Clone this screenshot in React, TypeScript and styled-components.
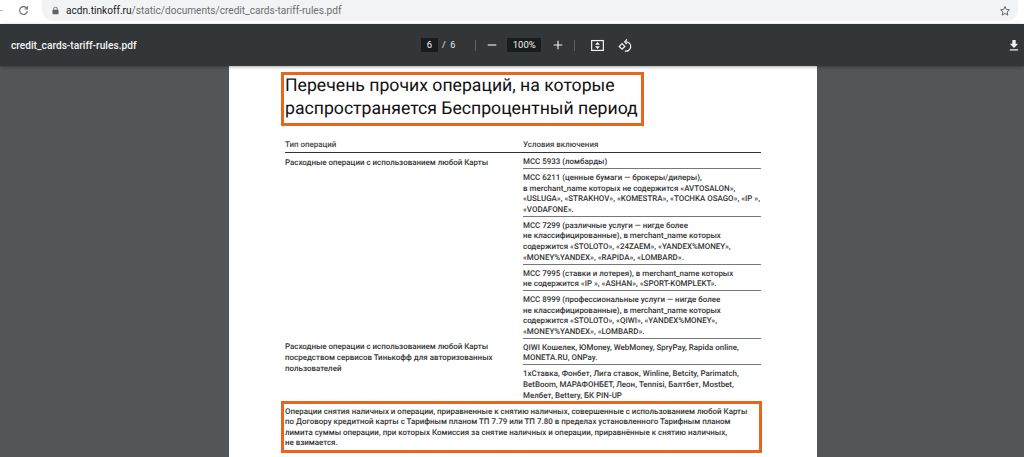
import React from "react";
import styled, {createGlobalStyle} from "styled-components";

const GlobalStyle = createGlobalStyle`
  html, body {
    margin: 0;
    padding: 0;
    height: 100%;
    overflow: hidden;
    background: #525659;
  }
  * {
    box-sizing: border-box;
  }
`;

const rows = [
  {
    title: "Расходные операции с использованием любой Карты",
    conditions: [
      ["MCC 5933 (ломбарды)"],
      [
        "MCC 6211 (ценные бумаги — брокеры/дилеры),",
        "в merchant_name которых не содержится «AVTOSALON»,",
        "«USLUGA», «STRAKHOV», «KOMESTRA», «TOCHKA OSAGO», «IP »,",
        "«VODAFONE».",
      ],
      [
        "MCC 7299 (различные услуги — нигде более",
        "не классифицированные), в merchant_name которых",
        "содержится «STOLOTO», «24ZAEM», «YANDEX%MONEY»,",
        "«MONEY%YANDEX», «RAPIDA», «LOMBARD».",
      ],
      [
        "MCC 7995 (ставки и лотерея), в merchant_name которых",
        "не содержится «IP », «ASHAN», «SPORT-KOMPLEKT».",
      ],
      [
        "MCC 8999 (профессиональные услуги — нигде более",
        "не классифицированные), в merchant_name которых",
        "содержится «STOLOTO», «QIWI», «YANDEX%MONEY»,",
        "«MONEY%YANDEX», «LOMBARD».",
      ],
    ],
  },
  {
    title:
      "Расходные операции с использованием любой Карты посредством сервисов Тинькофф для авторизованных пользователей",
    conditions: [
      [
        "QIWI Кошелек, ЮMoney, WebMoney, SpryPay, Rapida online,",
        "MONETA.RU, ONPay.",
      ],
      [
        "1xСтавка, Фонбет, Лига ставок, Winline, Betcity, Parimatch,",
        "BetBoom, МАРАФОНБЕТ, Леон, Tennisi, Балтбет, Mostbet,",
        "Мелбет, Bettery, БК PIN-UP",
      ],
    ],
  },
];

const noteLines = [
  "Операции снятия наличных и операции, приравненные к снятию наличных, совершенные с использованием любой Карты",
  "по Договору кредитной карты с Тарифным планом ТП 7.79 или ТП 7.80 в пределах установленного Тарифным планом",
  "лимита суммы операции, при которых Комиссия за снятие наличных и операции, приравнённые к снятию наличных,",
  "не взимается.",
];

const App = () => {
  return (
    <Screen>
      <GlobalStyle />
      <AddressBar>
        <NavIcons>
          <NavIcon viewBox="0 0 16 16" $muted>
            <path d="M14 8H3M7.5 3.5 3 8l4.5 4.5" />
          </NavIcon>
          <NavIcon viewBox="0 0 16 16">
            <path d="M13 5.2A5.7 5.7 0 1 0 13.7 9" />
            <path d="M13.6 1.8v4h-4" />
          </NavIcon>
        </NavIcons>
        <Omnibox>
          <LockIcon viewBox="0 0 10 12">
            <path d="M2 5V3.6a3 3 0 0 1 6 0V5h.6c.4 0 .7.3.7.7v4.800c0 .4-.3.7-.7.7H1.400c-.4 0-.7-.3-.7-.7V5.700c0-.4.3-.7.7-.7zm1.200 0h3.600V3.600a1.800 1.800 0 0 0-3.600 0z" />
          </LockIcon>
          <Url>
            <UrlHost>acdn.tinkoff.ru</UrlHost>/static/documents/credit_cards-tariff-rules.pdf
          </Url>
          <StarIcon viewBox="0 0 16 16">
            <path d="m8 2 1.800 4 4.200.4-3.200 2.800 1 4.300L8 11.200 4.200 13.500l1-4.300L2 6.400 6.200 6z" />
          </StarIcon>
        </Omnibox>
      </AddressBar>

      <PdfToolbar>
        <FileName>credit_cards-tariff-rules.pdf</FileName>
        <ToolbarCenter>
          <ValueBox $wide={false}>6</ValueBox>
          <PageTotal>/&nbsp;&nbsp;6</PageTotal>
          <Divider $before={20} $after={10} />
          <ToolIcon viewBox="0 0 14 14">
            <path d="M2 7h10" />
          </ToolIcon>
          <ValueBox $wide>100%</ValueBox>
          <ToolIcon viewBox="0 0 14 14">
            <path d="M2 7h10M7 2v10" />
          </ToolIcon>
          <Divider $before={10} $after={15} />
          <FitIcon viewBox="0 0 16 14">
            <rect x="1.700" y="1.700" width="12.600" height="10.600" />
            <path d="M6.800 5.500 8 4.200 9.200 5.500zM6.800 8.500 8 9.800 9.200 8.500z" fill="#f1f3f4" />
          </FitIcon>
          <RotateIcon viewBox="0 0 16 16">
            <path d="M8.500 4.200a4.900 4.900 0 1 1-1.200 9.600" />
            <path d="M4.300 6 1.300 9l3 3 3-3z" />
            <path d="m9.500 1.500-2.400 2.700 2.400 2.300" />
          </RotateIcon>
        </ToolbarCenter>
        <DownloadIcon viewBox="0 0 12 14">
          <path d="M4 1h4v4.500h3L6 10.500 1 5.500h3zM1 12h10v1.500H1z" />
        </DownloadIcon>
      </PdfToolbar>

      <Viewer>
        <Sheet>
          <Heading>
            Перечень прочих операций, на которые
            <br />
            распространяется Беспроцентный период
          </Heading>
          <TableHead>
            <HeadCell>Тип операций</HeadCell>
            <HeadCell>Условия включения</HeadCell>
          </TableHead>
          {rows.map((row, rowIndex) => (
            <TableRow key={rowIndex}>
              <RowTitle>{row.title}</RowTitle>
              <Conditions>
                {row.conditions.map((lines, index) => (
                  <Condition key={index} $ruled={index > 0 || rowIndex > 0}>
                    {lines.map((line) => (
                      <div key={line}>{line}</div>
                    ))}
                  </Condition>
                ))}
              </Conditions>
            </TableRow>
          ))}
          <Note>
            {noteLines.map((line) => (
              <div key={line}>{line}</div>
            ))}
          </Note>
        </Sheet>
      </Viewer>
    </Screen>
  );
};

const Screen = styled.div`
  display: flex;
  flex-direction: column;
  height: 100vh;
  overflow: hidden;
  font-family: Roboto, "Liberation Sans", sans-serif;
`;

const AddressBar = styled.div`
  display: flex;
  align-items: flex-start;
  height: 24px;
  flex: none;
  background: #fff;
`;

const NavIcons = styled.div`
  display: flex;
  align-items: center;
  gap: 13.500px;
  width: 49px;
  height: 21px;
  margin-left: -7px;
  flex: none;
`;

const NavIcon = styled.svg<{$muted?: boolean}>`
  width: 11px;
  height: 11px;
  flex: none;
  fill: none;
  stroke: ${(props) => (props.$muted ? "#b0b3b6" : "#5f6368")};
  stroke-width: 1.600;
`;

const Omnibox = styled.div`
  display: flex;
  align-items: center;
  flex: 1;
  height: 21px;
  margin-right: 6px;
  padding: 0 7px 0 10px;
  background: #f1f3f4;
  border-radius: 0 0 11px 11px;
`;

const LockIcon = styled.svg`
  width: 7px;
  height: 9px;
  flex: none;
  fill: #5f6368;
`;

const Url = styled.div`
  flex: 1;
  margin-left: 7px;
  font-size: 10.100px;
  color: #6b6f73;
  white-space: nowrap;
`;

const UrlHost = styled.span`
  color: #202124;
`;

const StarIcon = styled.svg`
  width: 12px;
  height: 12px;
  flex: none;
  fill: none;
  stroke: #5f6368;
  stroke-width: 1.300;
`;

const PdfToolbar = styled.div`
  display: flex;
  align-items: center;
  height: 42px;
  flex: none;
  padding: 0 5px 0 11px;
  background: #323639;
  box-shadow: 0 1px 3px rgba(0, 0, 0, 0.35);
  position: relative;
  z-index: 1;
`;

const FileName = styled.div`
  width: 410px;
  flex: none;
  font-size: 10.200px;
  font-weight: 500;
  color: #f1f3f4;
  white-space: nowrap;
`;

const ToolbarCenter = styled.div`
  display: flex;
  align-items: center;
  flex: 1;
`;

const ValueBox = styled.div<{$wide: boolean}>`
  width: ${(props) => (props.$wide ? "34px" : "17px")};
  height: 14px;
  margin: ${(props) => (props.$wide ? "0 11px 0 9px" : "0")};
  background: #191b1c;
  color: #f1f3f4;
  font-size: 9.500px;
  line-height: 14px;
  text-align: center;
`;

const PageTotal = styled.div`
  margin-left: 4px;
  font-size: 9px;
  color: #e8eaed;
  white-space: nowrap;
`;

const Divider = styled.div<{$before: number; $after: number}>`
  width: 1px;
  height: 11px;
  margin: 0 ${(props) => props.$after}px 0 ${(props) => props.$before}px;
  background: #5f6368;
  flex: none;
`;

const ToolIcon = styled.svg`
  width: 12px;
  height: 12px;
  flex: none;
  fill: none;
  stroke: #f1f3f4;
  stroke-width: 1.300;
`;

const FitIcon = styled.svg`
  width: 15px;
  height: 13px;
  flex: none;
  fill: none;
  stroke: #f1f3f4;
  stroke-width: 1.300;
`;

const RotateIcon = styled.svg`
  width: 15px;
  height: 15px;
  margin-left: 13px;
  flex: none;
  fill: none;
  stroke: #f1f3f4;
  stroke-width: 1.300;
`;

const DownloadIcon = styled.svg`
  width: 10px;
  height: 12px;
  flex: none;
  fill: #f1f3f4;
`;

const Viewer = styled.div`
  display: flex;
  justify-content: center;
  flex: 1;
  min-height: 0;
  background: #525659;
`;

const Sheet = styled.div`
  width: 588px;
  height: 100%;
  margin-left: 22px;
  padding: 6px 56px 0 52px;
  background: #fff;
  color: #2a2a2a;
  text-rendering: geometricPrecision;
`;

const Heading = styled.h1`
  width: 363px;
  height: 54px;
  margin: 0 0 13px;
  padding: 0 0 0 1px;
  border: 3px solid #e8651e;
  font-size: 17.650px;
  font-weight: 400;
  line-height: 23px;
  color: #111;
  white-space: nowrap;
`;

const TableHead = styled.div`
  display: grid;
  grid-template-columns: 238px 238px;
  margin-left: 4px;
  height: 14px;
  border-bottom: 1px solid #333;
`;

const HeadCell = styled.div`
  margin-top: 1px;
  font-size: 7.950px;
  font-weight: 500;
  line-height: 10px;
  color: #444;
`;

const TableRow = styled.div`
  display: grid;
  grid-template-columns: 238px 238px;
  margin-left: 4px;
`;

const RowTitle = styled.div`
  width: 220px;
  padding-top: 4.500px;
  font-size: 7.950px;
  font-weight: 500;
  line-height: 10.600px;
  color: #333;
`;

const Conditions = styled.div`
  display: flex;
  flex-direction: column;
`;

const Condition = styled.div<{$ruled: boolean}>`
  padding: 4px 0 0.400px;
  border-top: ${(props) => (props.$ruled ? "1px solid #777" : "0")};
  font-size: 7.950px;
  font-weight: 500;
  line-height: 10.600px;
  color: #333;
  white-space: nowrap;
`;

const Note = styled.div`
  width: 481px;
  height: 52px;
  margin-top: -1px;
  padding: 3px 0 0 1px;
  border: 3px solid #e8651e;
  font-size: 7.950px;
  font-weight: 500;
  line-height: 10.600px;
  color: #333;
  white-space: nowrap;
`;

export default App;
